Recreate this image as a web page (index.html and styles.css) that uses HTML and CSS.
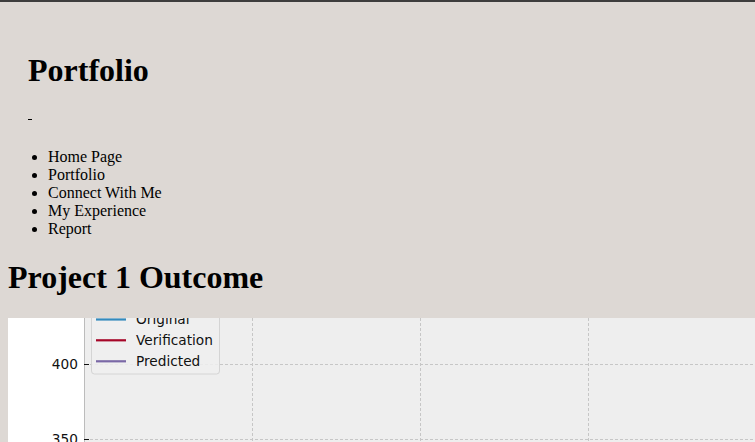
FILE: index.html
```html
<!DOCTYPE html>
<html lang="en">
<head>
<meta charset="utf-8">
<title>Project 1 Outcome</title>
<link rel="stylesheet" href="styles.css">
</head>
<body>
<header class="site-header">
  <div class="brand-block">
    <h1 class="brand">Portfolio</h1>
    <p class="home-link"><a href="#">&nbsp;</a></p>
  </div>
  <ul class="nav-list">
    <li>Home Page</li>
    <li>Portfolio</li>
    <li>Connect With Me</li>
    <li>My Experience</li>
    <li>Report</li>
  </ul>
  <h1 class="page-title">Project 1 Outcome</h1>
</header>
<main class="chart-wrap">
  <svg class="chart" viewBox="0 0 747 124" width="747" height="124" xmlns="http://www.w3.org/2000/svg">
    <rect x="0" y="0" width="747" height="124" fill="#ffffff"/>
    <rect x="77" y="0" width="670" height="124" fill="#eeeeee"/>
    <g stroke="#c6c6c6" stroke-width="1" stroke-dasharray="3,2" fill="none">
      <line x1="244.5" y1="0" x2="244.5" y2="124"/>
      <line x1="412.5" y1="0" x2="412.5" y2="124"/>
      <line x1="580.5" y1="0" x2="580.5" y2="124"/>
      <line x1="77" y1="46.5" x2="747" y2="46.5"/>
      <line x1="77" y1="121.5" x2="747" y2="121.5"/>
    </g>
    <line x1="76.5" y1="0" x2="76.5" y2="124" stroke="#bcbcbc" stroke-width="1"/>
    <g stroke="#111111" stroke-width="1">
      <line x1="76" y1="46.5" x2="81" y2="46.5"/>
      <line x1="76" y1="121.5" x2="81" y2="121.5"/>
    </g>
    <g class="tick-labels" text-anchor="end">
      <text x="70" y="51">400</text>
      <text x="70" y="126">350</text>
    </g>
    <rect x="83.5" y="-20" width="128" height="76" rx="3" ry="3" fill="#eeeeee" fill-opacity="0.85" stroke="#d4d4d4" stroke-width="1"/>
    <g stroke-width="2.2">
      <line x1="88" y1="1.5" x2="118" y2="1.5" stroke="#348abd"/>
      <line x1="88" y1="22.3" x2="118" y2="22.3" stroke="#a60628"/>
      <line x1="88" y1="43.3" x2="118" y2="43.3" stroke="#7a68a6"/>
    </g>
    <g class="legend-labels">
      <text x="128" y="6">Original</text>
      <text x="128" y="27">Verification</text>
      <text x="128" y="48">Predicted</text>
    </g>
  </svg>
</main>
</body>
</html>
```

FILE: styles.css
```css
html, body {
  margin: 0;
  padding: 0;
}

body {
  background: #ddd8d4;
  font-family: "Liberation Serif", "Times New Roman", serif;
  font-size: 16px;
  line-height: 18px;
  color: #000000;
}

.site-header {
  background: #ddd8d4;
  border-top: 2px solid #3d3d3d;
  padding: 50px 8px 22px;
}

.brand-block {
  padding-left: 20px;
}

.brand,
.page-title {
  margin: 0;
  font-size: 32px;
  line-height: 37px;
  font-weight: bold;
}

.home-link {
  margin: 15px 0 0;
}

.home-link a {
  color: #000000;
  text-decoration: underline;
}

.nav-list {
  margin: 26px 0 0;
  padding-left: 40px;
  list-style: disc;
}

.nav-list li {
  line-height: 18px;
}

.page-title {
  margin-top: 21px;
}

.chart-wrap {
  display: block;
  margin-left: 8px;
  height: 124px;
  overflow: hidden;
  background: #ffffff;
}

.chart {
  display: block;
  width: 747px;
  height: 124px;
}

.chart text {
  font-family: "DejaVu Sans", sans-serif;
  font-size: 13.7px;
  fill: #111111;
}
```
